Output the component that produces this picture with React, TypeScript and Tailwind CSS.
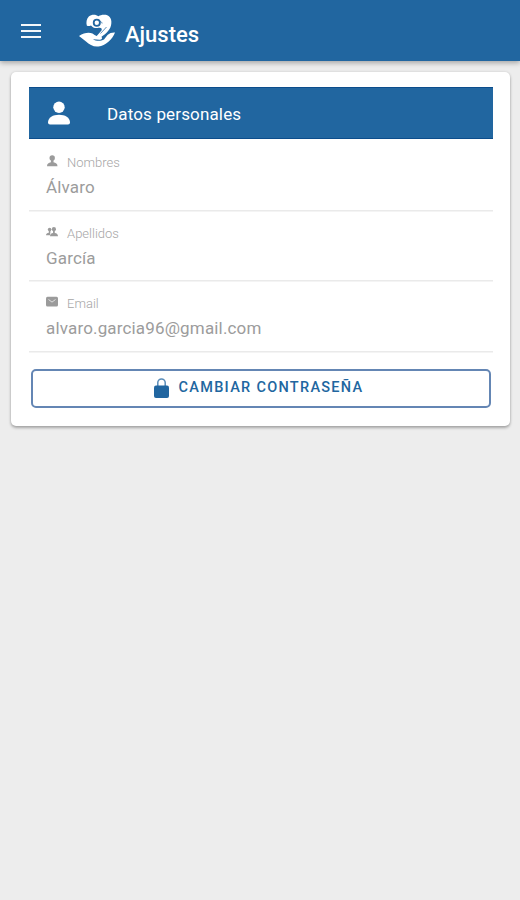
import React from 'react';

interface IconProps {
  className?: string;
}

function LogoIcon({ className }: IconProps) {
  return (
    <svg viewBox="0 0 36 34" className={className} fill="currentColor" aria-hidden>
      {/* Heart, with the ring and the arm cut into it */}
      <path d="M19.500 2.200C17 .2 12.500 0 9.800 2.500C7.500 4.800 7 8.500 7.800 11.500C9 12.500 10.500 12 12 11.500C13.500 13.600 16.500 14.600 19.500 13.800C22 13.200 23.500 14.500 22.500 16.500L17.500 22.200L20.200 24.500C25 21 30.500 17.500 32 11.500C33.500 6 31 1.500 26.800 .8C24 .4 21.500 .8 19.500 2.200Z" />
      <circle cx="17.800" cy="8.800" r="3.100" fill="none" stroke="#2166a0" strokeWidth="1.800" />
      <path d="M20.800 7.500C22.300 7.500 23.100 8.500 23.100 9.500M27.500 13L21.500 19.500" fill="none" stroke="#2166a0" strokeOpacity=".8" strokeWidth=".9" />
      <path d="M0 22C5 18.600 10 18 13.500 19.500C16.500 21.500 18.500 23 22.500 23C23.800 24.500 22.500 25.800 20.500 25.800L14 25.300C17 27.300 22 27.300 25 25.500L28.500 21C30.500 19 33.500 18.300 36 18.500C33.500 25.500 26.500 31.700 19.500 32.500C14.500 33.200 10.500 30.500 7 27.500Z" />
    </svg>
  );
}

function PersonIcon({ className }: IconProps) {
  return (
    <svg viewBox="0 0 24 24" className={className} fill="currentColor" aria-hidden>
      <circle cx="12" cy="6.200" r="5.700" />
      <path d="M1 21.500C1 16.500 6 13.800 12 13.800S23 16.500 23 21.500Q23 23.500 21 23.500H3Q1 23.500 1 21.500Z" />
    </svg>
  );
}

function SmallPersonIcon() {
  return (
    <svg viewBox="0 0 12 12" className="size-3" fill="currentColor" aria-hidden>
      <circle cx="6.200" cy="3" r="2.700" />
      <path d="M4.900 5H7.500V7.200C9.700 7.600 11.500 8.600 11.500 11.300H1C1 8.600 2.700 7.600 4.900 7.200Z" />
    </svg>
  );
}

function PeopleIcon() {
  return (
    <svg viewBox="0 0 12 12" className="size-3" fill="currentColor" aria-hidden>
      <circle cx="3.600" cy="3.600" r="1.800" />
      <circle cx="7.900" cy="3.200" r="2.100" />
      <path d="M2.800 5H4.400V6.500L4 9.200H0C0 7.700 1.300 6.900 2.800 6.700ZM7 5H8.800V6.900C10.800 7.200 12 8 12 10.300H4C4 8 5.200 7.200 7 6.900Z" />
    </svg>
  );
}

function MailIcon() {
  return (
    <svg viewBox="0 0 12 12" className="size-3" aria-hidden>
      <rect x="0" y=".8" width="12" height="9.700" rx="1.500" fill="currentColor" />
      <path d="M2.500 3.500L6 6.100L9.500 3.500" fill="none" stroke="#fff" strokeOpacity=".75" strokeWidth=".9" />
    </svg>
  );
}

function LockIcon() {
  return (
    <svg viewBox="0 0 15 20" className="h-5 w-[15px]" aria-hidden>
      <path d="M3.800 8V4.600a3.700 3.700 0 0 1 7.400 0V8" fill="none" stroke="currentColor" strokeOpacity=".75" strokeWidth="1.500" />
      <rect y="7.500" width="15" height="12.500" rx="2" fill="currentColor" />
    </svg>
  );
}

const fields = [
  { label: 'Nombres', value: 'Álvaro', icon: <SmallPersonIcon /> },
  { label: 'Apellidos', value: 'García', icon: <PeopleIcon /> },
  { label: 'Email', value: 'alvaro.garcia96@gmail.com', icon: <MailIcon /> },
];

export default function App() {
  return (
    <div className="min-h-screen bg-[#ededed] font-['Roboto',sans-serif]">
      <header className="flex h-[61px] items-center bg-[#2166a0] pl-[21px] text-white shadow-[0_2px_5px_rgba(0,0,0,0.3)]">
        <button type="button" aria-label="Menú" className="flex w-5 flex-col gap-[4px]">
          <span className="h-[2px] bg-white/95" />
          <span className="h-[2px] bg-white/95" />
          <span className="h-[2px] bg-white/95" />
        </button>
        <LogoIcon className="ml-[38px] h-[34px] w-9" />
        <h1 className="mt-[8px] ml-[10px] text-[22px] leading-7 font-medium">Ajustes</h1>
      </header>

      <main className="pt-[11px] pr-[10px] pl-[11px]">
        <section className="h-[354px] rounded-[5px] bg-white pt-[15px] pr-[17px] pl-[17.500px] shadow-[0_2px_3px_rgba(0,0,0,0.28),0_0_3px_rgba(0,0,0,0.12)]">
          <div className="flex h-[52px] items-center border-y border-[#0c4d8c] bg-[#2166a0] pl-[18.500px] text-white">
            <PersonIcon className="size-6" />
            <h2 className="mt-px ml-9 text-[17px] leading-6 tracking-[0.15px]">Datos personales</h2>
          </div>

          {fields.map((field) => (
            <div key={field.label} className="h-[70.500px] pt-[15px] pl-[17.500px] shadow-[0_1.500px_0_#eaeaea]">
              <div className="flex h-[18px] items-center text-[#9b9b9b]">
                <span className="-mt-1">{field.icon}</span>
                <span className="ml-[9px] text-[13px] font-light text-[#a6a6a6]">{field.label}</span>
              </div>
              <p className="mt-[3px] text-[17px] leading-6 tracking-[0.160px] text-[#9c9c9c]">{field.value}</p>
            </div>
          ))}

          <button
            type="button"
            className="mt-[18px] ml-[2px] flex h-[39px] w-[460px] items-center justify-center rounded-[5px] border-2 border-[#6486b4] text-[#2166a0]"
          >
            <LockIcon />
            <span className="-mt-px mr-[3px] ml-[9px] text-[14.500px] leading-5 font-medium tracking-[1.300px]">CAMBIAR CONTRASEÑA</span>
          </button>
        </section>
      </main>
    </div>
  );
}
